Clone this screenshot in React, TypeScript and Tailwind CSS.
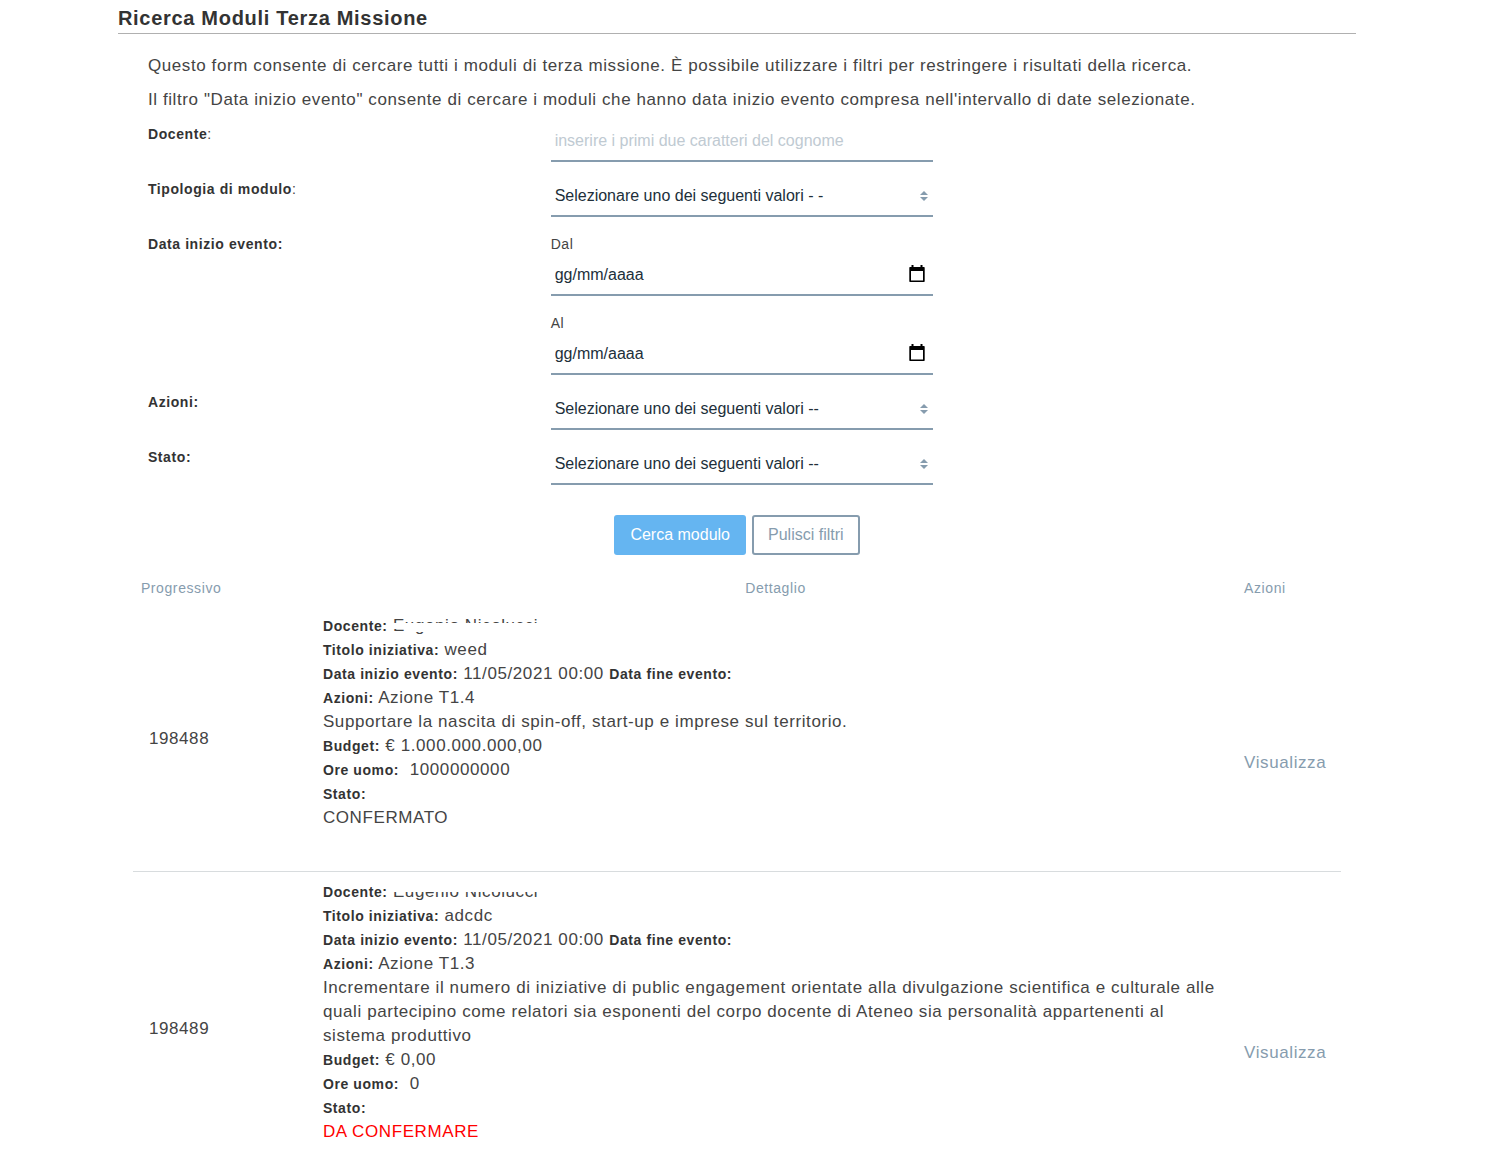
import { useState, type ReactNode } from 'react';

type Modulo = {
  id: number;
  docente: string;
  titolo: string;
  dataInizio: string;
  dataFine: string;
  azione: string;
  descrizione: string;
  budget: string;
  ore: string;
  stato: string;
  confermato: boolean;
};

const moduli: Modulo[] = [
  {
    id: 198488,
    docente: 'Eugenio Nicolucci',
    titolo: 'weed',
    dataInizio: '11/05/2021 00:00',
    dataFine: '',
    azione: 'Azione T1.4',
    descrizione: 'Supportare la nascita di spin-off, start-up e imprese sul territorio.',
    budget: '€ 1.000.000.000,00',
    ore: '1000000000',
    stato: 'CONFERMATO',
    confermato: true,
  },
  {
    id: 198489,
    docente: 'Eugenio Nicolucci',
    titolo: 'adcdc',
    dataInizio: '11/05/2021 00:00',
    dataFine: '',
    azione: 'Azione T1.3',
    descrizione:
      'Incrementare il numero di iniziative di public engagement orientate alla divulgazione scientifica e culturale alle quali partecipino come relatori sia esponenti del corpo docente di Ateneo sia personalità appartenenti al sistema produttivo',
    budget: '€ 0,00',
    ore: '0',
    stato: 'DA CONFERMARE',
    confermato: false,
  },
];

const fieldClass =
  'block h-10 w-full appearance-none border-b-2 border-[#869cae] bg-transparent px-1 text-base tracking-normal text-[#212f3a] outline-none';

function FormRow({ label, children }: { label: ReactNode; children: ReactNode }) {
  return (
    <div className="mb-[15px] grid grid-cols-3">
      <div className="px-[15px] text-sm leading-6">{label}</div>
      <div className="col-span-2 px-[15px]">
        <div className="w-full max-w-[382px]">{children}</div>
      </div>
    </div>
  );
}

function SelectField({ id, text }: { id: string; text: string }) {
  return (
    <div className="relative">
      <select id={id} className={fieldClass}>
        <option>{text}</option>
      </select>
      <svg
        className="pointer-events-none absolute right-[5px] top-[14px] h-[10px] w-2"
        viewBox="0 0 8 10"
        fill="#869cae"
      >
        <path d="M4 0 8 4H0zM4 10 0 6h8z" />
      </svg>
    </div>
  );
}

function DateField({ id, label }: { id: string; label: string }) {
  return (
    <div>
      <label htmlFor={id} className="block text-sm leading-6">
        {label}
      </label>
      <div className="relative">
        <input
          id={id}
          type="text"
          placeholder="gg/mm/aaaa"
          className={`${fieldClass} placeholder:text-[#212f3a]`}
        />
        <button type="button" aria-label="Apri calendario" className="absolute right-2 top-[9px]">
          <svg className="h-[18px] w-4" viewBox="0 0 16 18" fill="#000">
            <path d="M2.500 0h2v2h7V0h2v2H15a.7.7 0 0 1 .7.7v13.600a.7.7 0 0 1-.7.7H1a.7.7 0 0 1-.7-.7V2.700A.7.7 0 0 1 1 2h1.500zM2 6v9.500h12V6z" />
          </svg>
        </button>
      </div>
    </div>
  );
}

function Voce({ children }: { children: ReactNode }) {
  return <b className="text-sm leading-6 text-[#333]">{children}</b>;
}

// the surname is partly blanked out in the list
function Docente({ modulo }: { modulo: Modulo }) {
  return (
    <span className="relative">
      {modulo.docente}
      {modulo.confermato ? (
        <>
          <span className="absolute inset-x-0 top-[7px] h-[6px] bg-white" />
          <span className="absolute right-0 left-3 top-[7px] h-[9px] bg-white" />
        </>
      ) : (
        <span className="absolute inset-x-0 top-0 h-[10px] bg-white" />
      )}
    </span>
  );
}

export default function App() {
  const [docente, setDocente] = useState('');

  return (
    <div className="bg-white pr-8 font-['Liberation_Sans',Arial,sans-serif] text-[17px] leading-6 tracking-[0.035em] text-[#444]">
      <main className="mx-auto w-[84%] pt-1">
        <h1 className="border-b border-[#b0b0b0] pb-px text-xl leading-7 font-bold tracking-[0.035em] text-[#333]">
          Ricerca Moduli Terza Missione
        </h1>

        <form className="px-[15px] pt-5" onSubmit={(e) => e.preventDefault()}>
          <p className="mb-[10px] px-[15px]">
            Questo form consente di cercare tutti i moduli di terza missione. È possibile utilizzare i filtri per
            restringere i risultati della ricerca.
          </p>
          <p className="mb-[10px] px-[15px]">
            Il filtro "Data inizio evento" consente di cercare i moduli che hanno data inizio evento compresa
            nell'intervallo di date selezionate.
          </p>

          <FormRow
            label={
              <label htmlFor="docente">
                <b className="text-[#333]">Docente</b>:
              </label>
            }
          >
            <input
              id="docente"
              type="text"
              value={docente}
              onChange={(e) => setDocente(e.target.value)}
              placeholder="inserire i primi due caratteri del cognome"
              className={`${fieldClass} placeholder:text-[#c0cad2]`}
            />
          </FormRow>

          <FormRow
            label={
              <label htmlFor="tipologia">
                <b className="text-[#333]">Tipologia di modulo</b>:
              </label>
            }
          >
            <SelectField id="tipologia" text="Selezionare uno dei seguenti valori - -" />
          </FormRow>

          <FormRow label={<b className="text-[#333]">Data inizio evento:</b>}>
            <div className="flex flex-col gap-[15px]">
              <DateField id="dal" label="Dal" />
              <DateField id="al" label="Al" />
            </div>
          </FormRow>

          <FormRow
            label={
              <label htmlFor="azioni" className="font-bold text-[#333]">
                Azioni:
              </label>
            }
          >
            <SelectField id="azioni" text="Selezionare uno dei seguenti valori --" />
          </FormRow>

          <FormRow
            label={
              <label htmlFor="stato" className="font-bold text-[#333]">
                Stato:
              </label>
            }
          >
            <SelectField id="stato" text="Selezionare uno dei seguenti valori --" />
          </FormRow>

          <div className="flex justify-center gap-[6px] py-[15px] text-base tracking-normal">
            <button type="submit" className="h-10 rounded-[3px] bg-[#65b5f1] px-4 text-white">
              Cerca modulo
            </button>
            <button
              type="reset"
              onClick={() => setDocente('')}
              className="h-10 rounded-[3px] border-2 border-[#869cae] px-[14px] text-[#869cae]"
            >
              Pulisci filtri
            </button>
          </div>
        </form>

        <div className="px-[15px]">
          <table className="w-full table-fixed border-collapse">
            <thead>
              <tr className="text-sm leading-5 text-[#869cae]">
                <th className="w-[174px] px-2 py-2 text-left font-normal">Progressivo</th>
                <th className="py-2 pl-4 text-center font-normal">Dettaglio</th>
                <th className="w-[113px] py-2 pl-4 text-left font-normal">Azioni</th>
              </tr>
            </thead>
            <tbody>
              {moduli.map((m) => (
                <tr key={m.id} className="border-b border-[#d8dcde]">
                  <td className="px-4 align-middle">{m.id}</td>
                  <td className="pt-2 pr-2 pb-[41px] pl-4">
                    <div>
                      <Voce>Docente:</Voce> <Docente modulo={m} />
                    </div>
                    <div>
                      <Voce>Titolo iniziativa:</Voce> {m.titolo}
                    </div>
                    <div>
                      <Voce>Data inizio evento:</Voce> {m.dataInizio} <Voce>Data fine evento:</Voce> {m.dataFine}
                    </div>
                    <div>
                      <Voce>Azioni:</Voce> {m.azione}
                    </div>
                    <div>{m.descrizione}</div>
                    <div>
                      <Voce>Budget:</Voce> {m.budget}
                    </div>
                    <div>
                      <Voce>Ore uomo:</Voce> &nbsp;{m.ore}
                    </div>
                    <div>
                      <Voce>Stato:</Voce>
                    </div>
                    <div className={m.confermato ? '' : 'text-[#f00]'}>{m.stato}</div>
                  </td>
                  <td className="pt-12 pl-4 align-middle">
                    <a href="#visualizza" className="text-[#869cae]">
                      Visualizza
                    </a>
                  </td>
                </tr>
              ))}
            </tbody>
          </table>
        </div>
      </main>
    </div>
  );
}
